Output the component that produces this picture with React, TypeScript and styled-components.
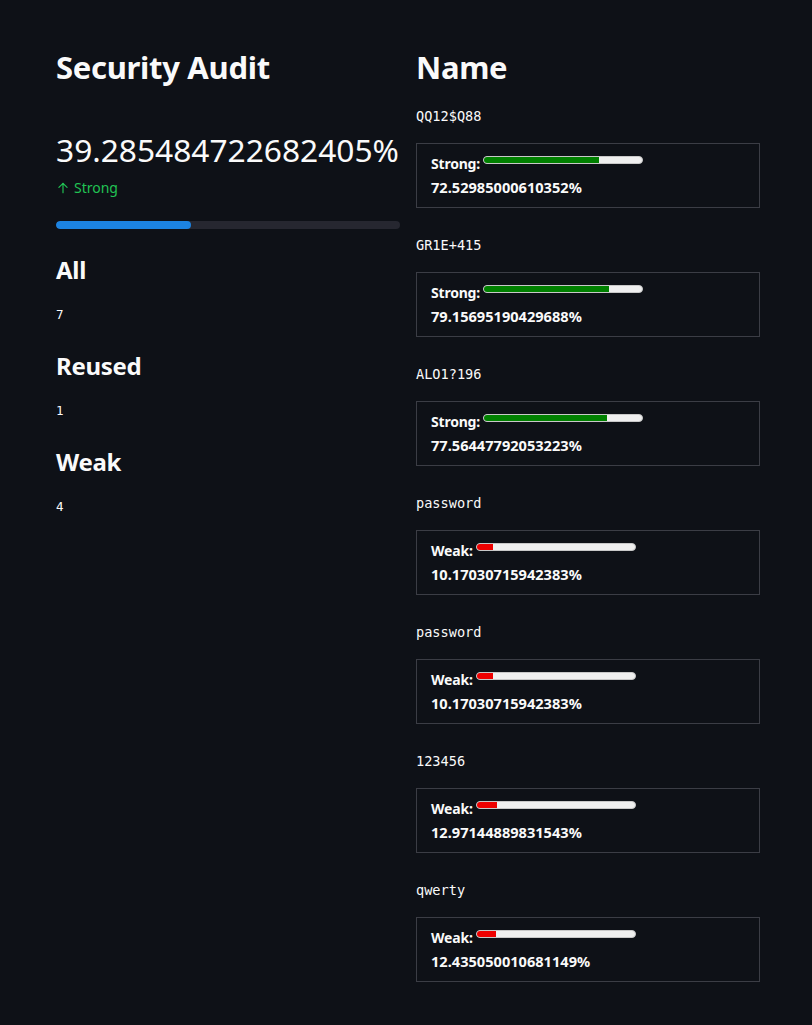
import React from "react";
import styled, { createGlobalStyle } from "styled-components";

const Global = createGlobalStyle`
  html, body { margin: 0; padding: 0; background: #0e1117; }
  body { font-family: "Noto Sans", sans-serif; color: #fafafa; }
  * { box-sizing: border-box; }
`;

const Page = styled.div`
  min-height: 1025px;
  background: #0e1117;
  padding: 44px 52px 0 56px;
  display: grid;
  grid-template-columns: 344px 344px;
  column-gap: 16px;
  align-items: start;
`;

const Column = styled.div`
  display: flex;
  flex-direction: column;
`;

const Title = styled.h1`
  margin: 0;
  font-family: "Noto Sans", sans-serif;
  font-weight: 700;
  font-size: 31px;
  line-height: 46px;
  letter-spacing: -0.3px;
  color: #fafafa;
`;

const MetricValue = styled.div`
  margin-top: 40px;
  font-family: "Noto Sans", sans-serif;
  font-size: 31.7px;
  line-height: 40px;
  color: #fafafa;
  white-space: nowrap;
`;

const Delta = styled.div`
  display: flex;
  align-items: center;
  gap: 4px;
  margin-top: 8px;
  font-size: 14px;
  line-height: 20px;
  color: #21c354;
`;

const Track = styled.div`
  margin-top: 23px;
  height: 8px;
  border-radius: 4px;
  background: #262730;
  overflow: hidden;
`;

const Fill = styled.div`
  height: 100%;
  background: #1c83e1;
  border-radius: 4px;
`;

const SubHead = styled.h3`
  margin: 24px 0 0;
  font-family: "Noto Sans", sans-serif;
  font-weight: 700;
  font-size: 24px;
  line-height: 34px;
  letter-spacing: -0.3px;
  color: #fafafa;
`;

const Mono = styled.div`
  font-family: "DejaVu Sans Mono", monospace;
  font-size: 12.5px;
  line-height: 20px;
  color: #fafafa;
  margin-top: 18px;
`;

const Entry = styled.div`
  display: flex;
  flex-direction: column;
  margin-top: 27px;
  &:first-of-type { margin-top: 0; }
`;

const Label = styled(Mono)`
  margin-top: 0;
  font-size: 13.6px;
`;

const Card = styled.div`
  margin-top: 17px;
  height: 65px;
  border: 1px solid #3b3d45;
  padding: 9px 14px 0;
  display: flex;
  flex-direction: column;
`;

const CardRow = styled.div`
  display: flex;
  align-items: flex-start;
  gap: 3px;
`;

const Bold = styled.span`
  font-family: "Noto Sans", sans-serif;
  font-weight: 700;
  font-size: 14px;
  line-height: 22px;
  color: #fafafa;
  letter-spacing: -0.2px;
`;

const Bar = styled.div`
  margin-top: 3px;
  width: 160px;
  height: 8px;
  border-radius: 4px;
  background: #efefef;
  border: 1px solid #c8c8c8;
  overflow: hidden;
`;

const BarFill = styled.div<{ $strong: boolean }>`
  height: 100%;
  background: ${(p) => (p.$strong ? "#008000" : "#ee0000")};
`;

const Pct = styled(Bold)`
  margin-top: 1px;
  font-size: 14.6px;
  letter-spacing: 0;
`;

const NameList = styled.div`
  display: flex;
  flex-direction: column;
  margin-top: 16px;
`;

const entries = [
  { name: "QQ12$Q88", v: 72.52985000610352 },
  { name: "GR1E+415", v: 79.15695190429688 },
  { name: "ALO1?196", v: 77.56447792053223 },
  { name: "password", v: 10.17030715942383 },
  { name: "password", v: 10.17030715942383 },
  { name: "123456", v: 12.97144889831543 },
  { name: "qwerty", v: 12.435050010681149 },
];

const ArrowUp = () => (
  <svg width="14" height="14" viewBox="0 0 24 24" fill="none" stroke="currentColor" strokeWidth="2" strokeLinecap="round" strokeLinejoin="round">
    <path d="M12 20V4" />
    <path d="M5 11l7-7 7 7" />
  </svg>
);

export default function App() {
  return (
    <>
      <Global />
      <Page>
        <Column>
          <Title>Security Audit</Title>
          <MetricValue>39.285484722682405%</MetricValue>
          <Delta>
            <ArrowUp />
            Strong
          </Delta>
          <Track>
            <Fill style={{ width: "39.2855%" }} />
          </Track>
          <SubHead>All</SubHead>
          <Mono>7</Mono>
          <SubHead>Reused</SubHead>
          <Mono>1</Mono>
          <SubHead>Weak</SubHead>
          <Mono>4</Mono>
        </Column>
        <Column>
          <Title>Name</Title>
          <NameList>
            {entries.map((e, i) => {
              const strong = e.v >= 50;
              return (
                <Entry key={i}>
                  <Label>{e.name}</Label>
                  <Card>
                    <CardRow>
                      <Bold>{strong ? "Strong:" : "Weak:"}</Bold>
                      <Bar>
                        <BarFill $strong={strong} style={{ width: `${e.v}%` }} />
                      </Bar>
                    </CardRow>
                    <Pct>{e.v}%</Pct>
                  </Card>
                </Entry>
              );
            })}
          </NameList>
        </Column>
      </Page>
    </>
  );
}
